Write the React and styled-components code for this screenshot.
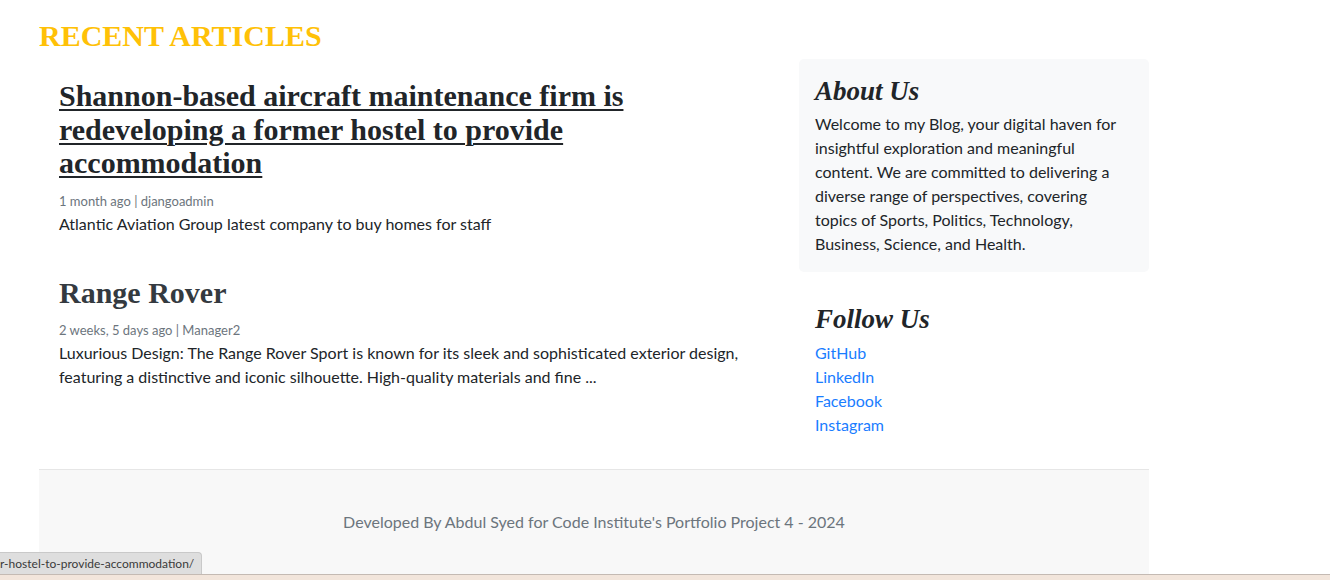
import React from "react";
import styled, { createGlobalStyle } from "styled-components";

const GlobalStyle = createGlobalStyle`
  html, body { margin: 0; padding: 0; background: #ffffff; }
  body {
    font-family: "Lato", "Noto Sans", sans-serif;
    font-size: 16px;
    line-height: 24px;
    color: #212529;
  }
  * { box-sizing: border-box; }
`;

const Container = styled.div`
  width: 1110px;
  margin-left: 39px;
  padding-top: 17px;
`;

const PageTitle = styled.h2`
  margin: 0 0 4px 0;
  font-family: "Liberation Serif", serif;
  font-weight: 700;
  font-size: 30px;
  line-height: 38px;
  color: #ffc107;
`;

const Row = styled.div`
  display: grid;
  grid-template-columns: 730px 350px;
  column-gap: 30px;
  margin-bottom: 16px;
`;

const Articles = styled.div`
  display: flex;
  flex-direction: column;
`;

const Article = styled.article`
  padding: 20px;
`;

const ArticleTitle = styled.h3`
  margin: 0 0 11px 0;
  font-family: "Liberation Serif", serif;
  font-weight: 700;
  font-size: 30px;
  line-height: 33.6px;
  color: ${(p) => (p.$active ? "#212529" : "#343a40")};
  text-decoration: ${(p) => (p.$active ? "underline" : "none")};
  text-decoration-thickness: 2px;
  text-underline-offset: 3px;
`;

const Meta = styled.p`
  margin: 0;
  font-size: 13px;
  line-height: 21px;
  color: #6c757d;
`;

const Excerpt = styled.p`
  margin: 0;
  font-size: 16px;
  line-height: 24px;
  color: #212529;
`;

const Sidebar = styled.aside`
  display: flex;
  flex-direction: column;
  gap: 15px;
`;

const SideCard = styled.section`
  padding: 16px;
  border-radius: 5px;
  background: ${(p) => (p.$filled ? "#f8f9fa" : "transparent")};
`;

const SideHeading = styled.h4`
  margin: 0 0 ${(p) => p.$gap || 3}px 0;
  font-family: "Liberation Serif", serif;
  font-style: italic;
  font-weight: 700;
  font-size: 27px;
  line-height: 33.6px;
  color: #212529;
`;

const SideText = styled.p`
  margin: 0;
  font-size: 16px;
  line-height: 24px;
  color: #212529;
`;

const LinkList = styled.ul`
  list-style: none;
  margin: 0;
  padding: 0;
`;

const SocialLink = styled.a`
  display: block;
  color: #1a7dff;
  text-decoration: none;
  font-size: 16px;
  line-height: 24px;
`;

const Footer = styled.footer`
  border-top: 1px solid #e6e6e6;
  background: #f8f8f8;
  padding: 40px 0 46px;
  text-align: center;
  color: #6c757d;
  font-size: 16px;
  line-height: 24px;
`;

const StatusBubble = styled.div`
  position: fixed;
  left: 0;
  bottom: 6px;
  height: 22px;
  padding: 0 7px 0 0;
  background: #dedede;
  border: 1px solid #c9c9c9;
  border-left: none;
  border-bottom: none;
  border-top-right-radius: 4px;
  font-family: "Lato", sans-serif;
  font-size: 12px;
  line-height: 21px;
  color: #3a3a3a;
  white-space: nowrap;
`;

const BottomStrip = styled.div`
  position: fixed;
  left: 0;
  right: 0;
  bottom: 0;
  height: 6px;
  background: #f2e5db;
  border-top: 1px solid #c4bab3;
`;

const articles = [
  {
    title:
      "Shannon-based aircraft maintenance firm is redeveloping a former hostel to provide accommodation",
    meta: "1 month ago | djangoadmin",
    excerpt: "Atlantic Aviation Group latest company to buy homes for staff",
    active: true,
  },
  {
    title: "Range Rover",
    meta: "2 weeks, 5 days ago | Manager2",
    excerpt:
      "Luxurious Design: The Range Rover Sport is known for its sleek and sophisticated exterior design, featuring a distinctive and iconic silhouette. High-quality materials and fine ...",
    active: false,
  },
];

const links = ["GitHub", "LinkedIn", "Facebook", "Instagram"];

export default function App() {
  return (
    <>
      <GlobalStyle />
      <Container>
        <PageTitle>RECENT ARTICLES</PageTitle>
        <Row>
          <Articles>
            {articles.map((a) => (
              <Article key={a.title}>
                <ArticleTitle $active={a.active}>{a.title}</ArticleTitle>
                <Meta>{a.meta}</Meta>
                <Excerpt>{a.excerpt}</Excerpt>
              </Article>
            ))}
          </Articles>
          <Sidebar>
            <SideCard $filled>
              <SideHeading>About Us</SideHeading>
              <SideText>
                Welcome to my Blog, your digital haven for insightful
                exploration and meaningful content. We are committed to
                delivering a diverse range of perspectives, covering topics of
                Sports, Politics, Technology, Business, Science, and Health.
              </SideText>
            </SideCard>
            <SideCard>
              <SideHeading $gap={5}>Follow Us</SideHeading>
              <LinkList>
                {links.map((l) => (
                  <li key={l}>
                    <SocialLink href="#">{l}</SocialLink>
                  </li>
                ))}
              </LinkList>
            </SideCard>
          </Sidebar>
        </Row>
        <Footer>
          Developed By Abdul Syed for Code Institute's Portfolio Project 4 - 2024
        </Footer>
      </Container>
      <StatusBubble>r-hostel-to-provide-accommodation/</StatusBubble>
      <BottomStrip />
    </>
  );
}
